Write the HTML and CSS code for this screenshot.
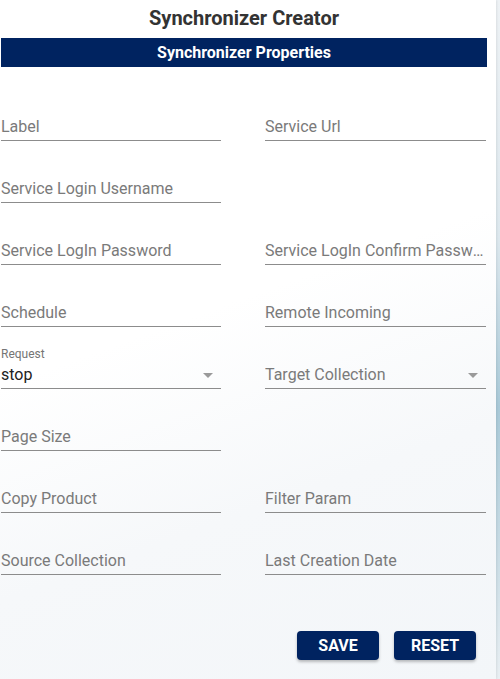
FILE: index.html
```html
<!DOCTYPE html>
<html>
<head>
<meta charset="utf-8">
<link rel="stylesheet" href="styles.css">
</head>
<body>
<div class="panel">
  <h1 class="title">Synchronizer Creator</h1>
  <div class="section-bar">Synchronizer Properties</div>
  <div class="form-grid">
    <div class="field"><div class="input placeholder">Label</div></div>
    <div class="field"><div class="input placeholder">Service Url</div></div>

    <div class="field"><div class="input placeholder">Service Login Username</div></div>
    <div class="empty"></div>

    <div class="field"><div class="input placeholder">Service LogIn Password</div></div>
    <div class="field"><div class="input placeholder">Service LogIn Confirm Password</div></div>

    <div class="field"><div class="input placeholder">Schedule</div></div>
    <div class="field"><div class="input placeholder">Remote Incoming</div></div>

    <div class="field">
      <div class="float-label">Request</div>
      <div class="input select value"><span class="select-text">stop</span><span class="arrow"></span></div>
    </div>
    <div class="field">
      <div class="input select placeholder"><span class="select-text">Target Collection</span><span class="arrow"></span></div>
    </div>

    <div class="field"><div class="input placeholder">Page Size</div></div>
    <div class="empty"></div>

    <div class="field"><div class="input placeholder">Copy Product</div></div>
    <div class="field"><div class="input placeholder">Filter Param</div></div>

    <div class="field"><div class="input placeholder">Source Collection</div></div>
    <div class="field"><div class="input placeholder">Last Creation Date</div></div>
  </div>
  <div class="actions">
    <button class="btn">SAVE</button>
    <button class="btn">RESET</button>
  </div>
</div>
</body>
</html>
```

FILE: styles.css
```css
html, body {
  margin: 0;
  padding: 0;
  height: 100%;
}
body {
  font-family: Roboto, "Liberation Sans", sans-serif;
  background: linear-gradient(180deg, #eef2f5 0%, #dde8ee 35%, #a9c9d8 60%, #cfe0e8 85%, #e9eff3 100%);
  overflow: hidden;
}
.panel {
  width: 486px;
  height: 679px;
  padding-left: 1px;
  padding-right: 9px;
  box-sizing: content-box;
  background: linear-gradient(160deg, #ffffff 0%, #ffffff 45%, #f6f8fa 70%, #f3f6f9 100%);
  box-shadow: 1px 0 2px rgba(0,0,0,0.08);
  display: flex;
  flex-direction: column;
}
.title {
  margin: 0;
  padding-top: 6px;
  height: 38px;
  box-sizing: border-box;
  text-align: center;
  font-size: 20px;
  line-height: 24px;
  font-weight: 700;
  color: #333333;
}
.section-bar {
  height: 29px;
  background: #002360;
  color: #ffffff;
  font-weight: 700;
  font-size: 16px;
  line-height: 29px;
  text-align: center;
}
.form-grid {
  margin-top: 12px;
  display: grid;
  grid-template-columns: 220px 221px;
  column-gap: 44px;
  grid-auto-rows: 62px;
}
.field {
  display: flex;
  flex-direction: column;
  justify-content: flex-end;
  min-width: 0;
}
.float-label {
  font-size: 12px;
  line-height: 14px;
  color: #757575;
  margin-bottom: 4px;
}
.input {
  font-size: 16px;
  line-height: 20px;
  padding-bottom: 3px;
  border-bottom: 1px solid #8c8c8c;
  white-space: nowrap;
  overflow: hidden;
  text-overflow: ellipsis;
  padding-right: 1px;
}
.placeholder {
  color: #7a7a7a;
}
.value {
  color: #222222;
}
.select {
  display: flex;
  align-items: center;
}
.select-text {
  flex: 1;
}
.arrow {
  width: 0;
  height: 0;
  border-left: 5px solid transparent;
  border-right: 5px solid transparent;
  border-top: 5px solid #9a9a9a;
  margin-right: 7px;
  margin-top: 1px;
}
.actions {
  margin-top: 56px;
  display: flex;
  justify-content: flex-end;
  gap: 15px;
  padding-right: 11px;
}
.btn {
  width: 82px;
  height: 29px;
  border: none;
  border-radius: 4px;
  background: #002360;
  color: #ffffff;
  font-family: Roboto, "Liberation Sans", sans-serif;
  font-weight: 700;
  font-size: 16px;
  padding: 0;
  box-shadow: 0 2px 3px rgba(0,0,0,0.25);
}
```
